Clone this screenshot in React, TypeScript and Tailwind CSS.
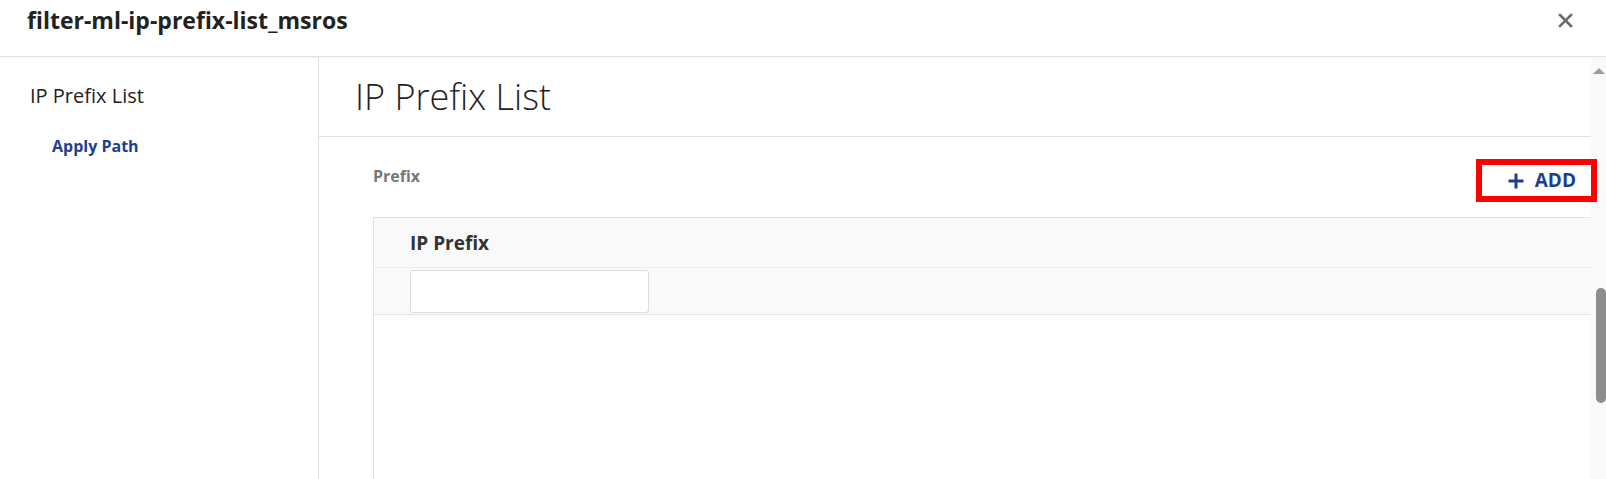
const font = "font-['Open_Sans',_'Noto_Sans',_sans-serif]";

function CloseIcon() {
  return (
    <svg width="15" height="15" viewBox="0 0 15 15" fill="none" stroke="#6b6b6b" strokeWidth="2.6" strokeLinecap="square">
      <path d="M2 2L13 13M13 2L2 13" />
    </svg>
  );
}

function PlusIcon() {
  return (
    <svg width="16" height="16" viewBox="0 0 16 16" fill="none" stroke="#1a3f91" strokeWidth="3">
      <path d="M8 0.5V15.5M0.5 8H15.5" />
    </svg>
  );
}

function Sidebar() {
  return (
    <aside className="w-[319px] shrink-0 border-r border-[#dedede]">
      <p className="pl-[30px] pt-[25px] text-[20px] leading-[28px] text-[#222]">IP Prefix List</p>
      <p className="pl-[52px] pt-[26px] text-[16px] font-bold leading-[20px] text-[#1c3f94]">Apply Path</p>
    </aside>
  );
}

function Scrollbar() {
  return (
    <div className="w-[15px] shrink-0 bg-[#f9f9f9]">
      <div className="mx-auto mt-[11px] h-0 w-0 border-x-[6px] border-b-[6px] border-x-transparent border-b-[#9c9c9c]" />
      <div className="ml-[5px] mt-[214px] h-[115px] w-[10px] rounded-[5px] bg-[#8d8d8d]" />
    </div>
  );
}

function PrefixTable() {
  return (
    <div className="mt-[21px] flex-1 border-l border-t border-[#e2e2e2]">
      <div className="flex h-[50px] items-center border-b border-[#ececec] bg-[#f9f9f9] pl-[36px]">
        <span className="text-[19px] font-bold leading-[26px] text-[#333]">IP Prefix</span>
      </div>
      <div className="flex h-[47px] items-center border-b border-[#e6e6e6] bg-[#f9f9f9] pl-[36px]">
        <input className="h-[43px] w-[239px] rounded-[3px] border border-[#dcdcdc] bg-white px-2 outline-none" />
      </div>
    </div>
  );
}

export default function App() {
  return (
    <div className={`flex h-[479px] w-[1606px] flex-col overflow-hidden bg-white ${font}`}>
      <header className="flex h-[57px] shrink-0 items-start justify-between border-b border-[#e3e3e3] pl-[27px] pr-[33px] pt-[4px] shadow-[0_1px_2px_rgba(0,0,0,0.05)]">
        <h1 className="text-[23px] font-bold leading-[32px] text-[#222]">filter-ml-ip-prefix-list_msros</h1>
        <button className="mt-[9px]">
          <CloseIcon />
        </button>
      </header>

      <div className="flex min-h-0 flex-1">
        <Sidebar />
        <main className="flex min-w-0 flex-1">
          <div className="flex min-w-0 flex-1 flex-col">
            <div className="flex h-[80px] shrink-0 items-start border-b border-[#e0e0e0] pl-[36px] pt-[18px]">
              <h2 className="text-[36px] font-light leading-[44px] text-[#1f1f1f]">IP Prefix List</h2>
            </div>
            <div className="flex min-h-0 flex-1 flex-col pl-[54px]">
              <div className="flex items-start justify-between pt-[28px]">
                <span className="mt-[3px] text-[16px] font-bold leading-[16px] text-[#777]">Prefix</span>
                <button className="relative z-10 flex h-[31px] w-[109px] items-center justify-end gap-[11px] pr-[15px] text-[19px] font-bold text-[#1a3f91] outline outline-[6px] outline-offset-0 outline-[#ff0000]">
                  <PlusIcon />
                  <span className="leading-none">ADD</span>
                </button>
              </div>
              <PrefixTable />
            </div>
          </div>
          <Scrollbar />
        </main>
      </div>
    </div>
  );
}
